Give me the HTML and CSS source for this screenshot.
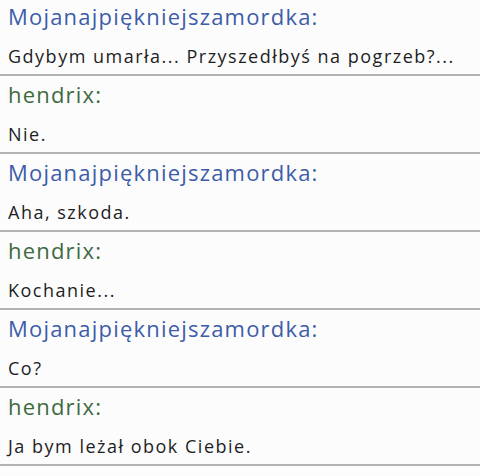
FILE: index.html
```html
<!DOCTYPE html>
<html lang="pl">
<head>
<meta charset="utf-8">
<link rel="stylesheet" href="styles.css">
</head>
<body>
<div class="chat">
  <div class="msg">
    <div class="name her">Mojanajpiękniejszamordka:</div>
    <div class="text">Gdybym umarła... Przyszedłbyś na pogrzeb?...</div>
  </div>
  <div class="msg">
    <div class="name him">hendrix:</div>
    <div class="text">Nie.</div>
  </div>
  <div class="msg">
    <div class="name her">Mojanajpiękniejszamordka:</div>
    <div class="text">Aha, szkoda.</div>
  </div>
  <div class="msg">
    <div class="name him">hendrix:</div>
    <div class="text">Kochanie...</div>
  </div>
  <div class="msg">
    <div class="name her">Mojanajpiękniejszamordka:</div>
    <div class="text">Co?</div>
  </div>
  <div class="msg">
    <div class="name him">hendrix:</div>
    <div class="text">Ja bym leżał obok Ciebie.</div>
  </div>
</div>
</body>
</html>
```

FILE: styles.css
```css
html, body {
  margin: 0;
  padding: 0;
  background: #fcfcfd;
}
.chat {
  display: flex;
  flex-direction: column;
  gap: 2px;
  font-family: "Open Sans", sans-serif;
}
.msg {
  height: 74px;
  border-bottom: 2px solid #b3b3b3;
  padding-left: 8px;
  box-sizing: content-box;
  overflow: hidden;
}
.name {
  font-size: 22px;
  letter-spacing: 1.2px;
  line-height: 33px;
  height: 33px;
}
.her { color: #3d5ca8; }
.him { color: #3f6a3f; }
.text {
  padding-top: 5px;
  font-size: 18px;
  letter-spacing: 1.5px;
  line-height: 36px;
  color: #1e1e1e;
  white-space: nowrap;
}
```
